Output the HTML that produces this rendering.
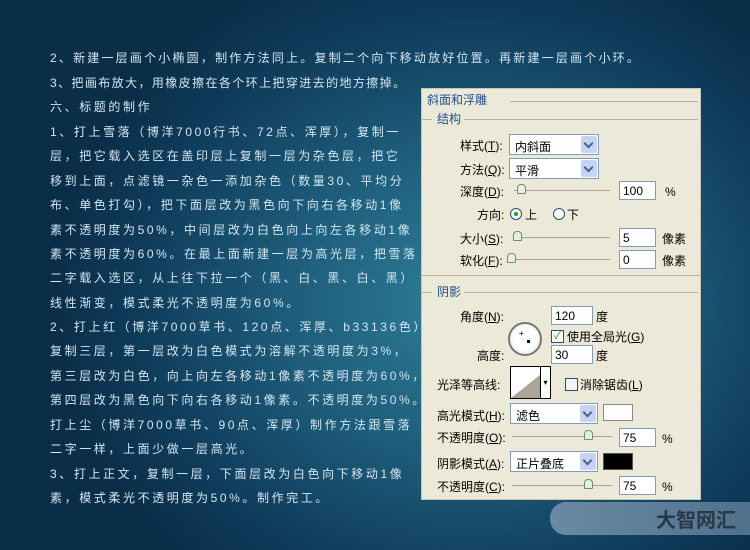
<!DOCTYPE html>
<html><head><meta charset="utf-8"><style>
*{margin:0;padding:0;box-sizing:border-box}
body{width:750px;height:550px;overflow:hidden;position:relative;font-family:"Liberation Sans","Noto Sans CJK SC",sans-serif;
background:radial-gradient(ellipse 420px 360px at 470px 300px,#2f7f98 0%,#1d5c7a 45%,#0f3b5a 80%,#0a2d48 100%);}
.t{position:absolute;left:50px;color:#d5e6ef;font-size:12px;letter-spacing:2.6px;white-space:nowrap;line-height:14px}
.p{position:absolute;left:421px;top:88px;width:280px;height:412px;background:#ece9d8;border:1px solid #c9c5b2;font-size:12px;color:#000}
.a{position:absolute;white-space:nowrap;line-height:14px}
.blue{color:#1f4f8f}
.hl{position:absolute;height:1px;background:#b5b2a0}
.sel{position:absolute;height:21px;background:#fff;border:1px solid #7f9db9;font-size:12px;padding:3px 5px}
.sel i{position:absolute;right:1px;top:1px;width:16px;height:17px;background:#c4d3f6;border-radius:2px}
.sel i:after{content:"";position:absolute;left:4px;top:4px;width:5px;height:5px;border-right:2px solid #4d6185;border-bottom:2px solid #4d6185;transform:rotate(45deg)}
.in{position:absolute;height:19px;background:#fff;border:1px solid #7f9db9;font-size:12px;padding:2px 3px}
.tr{position:absolute;height:1px;background:#a8a597}
.th{position:absolute;width:9px;height:10px;background:#e4f0e2;border:1px solid #6d8f6d;border-radius:4px 4px 1px 1px}
</style></head><body>
<div class="t" style="top:51px;letter-spacing:2.2px">2、新建一层画个小椭圆，制作方法同上。复制二个向下移动放好位置。再新建一层画个小环。</div>
<div class="t" style="top:76px;letter-spacing:1.4px">3、把画布放大，用橡皮擦在各个环上把穿进去的地方擦掉。</div>
<div class="t" style="top:100px">六、标题的制作</div>
<div class="t" style="top:125px">1、打上雪落（博洋7000行书、72点、浑厚），复制一</div>
<div class="t" style="top:149px">层，把它载入选区在盖印层上复制一层为杂色层，把它</div>
<div class="t" style="top:174px">移到上面，点滤镜一杂色一添加杂色（数量30、平均分</div>
<div class="t" style="top:198px">布、单色打勾），把下面层改为黑色向下向右各移动1像</div>
<div class="t" style="top:223px">素不透明度为50%，中间层改为白色向上向左各移动1像</div>
<div class="t" style="top:247px">素不透明度为60%。在最上面新建一层为高光层，把雪落</div>
<div class="t" style="top:271px">二字载入选区，从上往下拉一个（黑、白、黑、白、黑）</div>
<div class="t" style="top:296px">线性渐变，模式柔光不透明度为60%。</div>
<div class="t" style="top:320px">2、打上红（博洋7000草书、120点、浑厚、b33136色）</div>
<div class="t" style="top:344px">复制三层，第一层改为白色模式为溶解不透明度为3%，</div>
<div class="t" style="top:369px">第三层改为白色，向上向左各移动1像素不透明度为60%，</div>
<div class="t" style="top:393px">第四层改为黑色向下向右各移动1像素。不透明度为50%。</div>
<div class="t" style="top:418px">打上尘（博洋7000草书、90点、浑厚）制作方法跟雪落</div>
<div class="t" style="top:442px">二字一样，上面少做一层高光。</div>
<div class="t" style="top:467px">3、打上正文，复制一层，下面层改为白色向下移动1像</div>
<div class="t" style="top:491px">素，模式柔光不透明度为50%。制作完工。</div>

<div class="p">
<div class="a blue" style="left:5px;top:4px">斜面和浮雕</div>
<div class="hl" style="left:88px;top:12px;width:188px"></div>
<div class="hl" style="left:0;top:30px;width:10px"></div>
<div class="a blue" style="left:15px;top:23px">结构</div>
<div class="hl" style="left:42px;top:30px;width:234px"></div>
<div class="a" style="left:38px;top:50px">样式(<u>T</u>):</div>
<div class="sel" style="left:87px;top:45px;width:90px">内斜面<i></i></div>
<div class="a" style="left:38px;top:74px">方法(<u>Q</u>):</div>
<div class="sel" style="left:87px;top:69px;width:90px">平滑<i></i></div>
<div class="a" style="left:38px;top:96px">深度(<u>D</u>):</div>
<div class="tr" style="left:92px;top:101px;width:96px"></div><div class="th" style="left:95px;top:95px"></div>
<div class="in" style="left:197px;top:92px;width:37px">100</div><div class="a" style="left:243px;top:96px">%</div>
<div class="a" style="left:55px;top:119px">方向:</div>
<div style="position:absolute;left:88px;top:119px;width:12px;height:12px;border:1px solid #1c5180;border-radius:50%;background:#fff"><div style="position:absolute;left:3px;top:3px;width:4px;height:4px;background:#21a121;border-radius:50%"></div></div>
<div class="a" style="left:103px;top:119px">上</div>
<div style="position:absolute;left:131px;top:119px;width:12px;height:12px;border:1px solid #1c5180;border-radius:50%;background:#fff"></div>
<div class="a" style="left:145px;top:119px">下</div>
<div class="a" style="left:38px;top:143px">大小(<u>S</u>):</div>
<div class="tr" style="left:92px;top:148px;width:96px"></div><div class="th" style="left:91px;top:142px"></div>
<div class="in" style="left:197px;top:139px;width:37px">5</div><div class="a" style="left:240px;top:143px">像素</div>
<div class="a" style="left:38px;top:165px">软化(<u>F</u>):</div>
<div class="tr" style="left:89px;top:170px;width:99px"></div><div class="th" style="left:85px;top:164px"></div>
<div class="in" style="left:197px;top:161px;width:37px">0</div><div class="a" style="left:240px;top:165px">像素</div>
<div class="hl" style="left:0;top:186px;width:278px"></div>
<div class="hl" style="left:0;top:203px;width:10px"></div>
<div class="a blue" style="left:15px;top:196px">阴影</div>
<div class="hl" style="left:42px;top:203px;width:234px"></div>
<div class="a" style="left:38px;top:221px">角度(<u>N</u>):</div>
<div style="position:absolute;left:86px;top:233px;width:34px;height:34px;border:2px solid #777;border-radius:50%;background:radial-gradient(circle,#fff 50%,#ddd 100%)"><div style="position:absolute;left:17px;top:16px;width:3px;height:3px;background:#000"></div><div style="position:absolute;left:9px;top:6px;font-size:8px;line-height:8px">+</div></div>
<div class="in" style="left:129px;top:217px;width:42px">120</div><div class="a" style="left:174px;top:221px">度</div>
<div style="position:absolute;left:129px;top:241px;width:13px;height:13px;border:1px solid #1c5180;background:#fff;color:#21a121;font-size:11px;line-height:11px;text-align:center">✓</div>
<div class="a" style="left:145px;top:241px">使用全局光(<u>G</u>)</div>
<div class="a" style="left:55px;top:260px">高度:</div>
<div class="in" style="left:129px;top:256px;width:42px">30</div><div class="a" style="left:174px;top:260px">度</div>
<div class="a" style="left:15px;top:289px">光泽等高线:</div>
<div style="position:absolute;left:88px;top:277px;width:41px;height:33px;border:1px solid #000;background:linear-gradient(to bottom right,#fff 50%,#aca597 50%)"></div>
<div style="position:absolute;left:118px;top:277px;width:11px;height:33px;border:1px solid #000;background:#fff;font-size:8px;text-align:center;line-height:31px">▾</div>
<div style="position:absolute;left:143px;top:289px;width:13px;height:13px;border:1px solid #1c5180;background:#f4f4f0"></div>
<div class="a" style="left:158px;top:289px">消除锯齿(<u>L</u>)</div>
<div class="a" style="left:15px;top:320px">高光模式(<u>H</u>):</div>
<div class="sel" style="left:88px;top:314px;width:88px">滤色<i></i></div>
<div style="position:absolute;left:181px;top:315px;width:30px;height:17px;background:#fff;border:1px solid #888"></div>
<div class="a" style="left:15px;top:342px">不透明度(<u>O</u>):</div>
<div class="tr" style="left:90px;top:347px;width:100px"></div><div class="th" style="left:162px;top:341px"></div>
<div class="in" style="left:197px;top:339px;width:37px">75</div><div class="a" style="left:240px;top:343px">%</div>
<div class="a" style="left:15px;top:368px">阴影模式(<u>A</u>):</div>
<div class="sel" style="left:88px;top:362px;width:88px">正片叠底<i></i></div>
<div style="position:absolute;left:181px;top:364px;width:30px;height:17px;background:#000;border:1px solid #555"></div>
<div class="a" style="left:15px;top:391px">不透明度(<u>C</u>):</div>
<div class="tr" style="left:90px;top:396px;width:100px"></div><div class="th" style="left:162px;top:390px"></div>
<div class="in" style="left:197px;top:387px;width:37px">75</div><div class="a" style="left:240px;top:391px">%</div>
</div>

<div style="position:absolute;left:550px;top:502px;width:210px;height:33px;border-radius:16px 0 0 16px;background:linear-gradient(90deg,#6a8aa2,#5a7b96 60%,#4e6e8a)"></div>
<div style="position:absolute;left:656px;top:506px;font-size:20px;font-weight:bold;color:#2a3846;letter-spacing:0;font-family:'Noto Sans CJK SC',sans-serif;line-height:26px">大智网汇</div>
</body></html>
